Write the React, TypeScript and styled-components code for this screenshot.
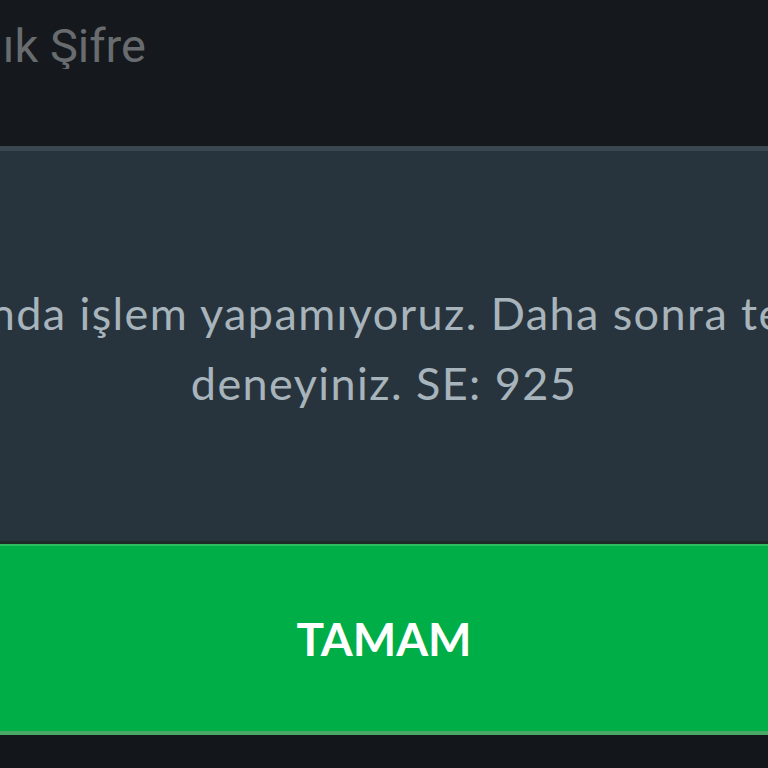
import React from "react";
import styled, { createGlobalStyle } from "styled-components";

const Global = createGlobalStyle`
  html, body { margin: 0; padding: 0; background: #15191e; }
  #root { width: 768px; height: 768px; }
`;

const Page = styled.div`
  width: 768px;
  height: 768px;
  overflow: hidden;
  background: #15191e;
  display: flex;
  flex-direction: column;
`;

const Header = styled.div`
  height: 146px;
  flex: none;
  padding-top: 22px;
  box-sizing: border-box;
`;

const LabelClip = styled.div`
  width: 146px;
  display: flex;
  justify-content: flex-end;
  overflow: hidden;
`;

const Label = styled.span`
  font-family: Roboto, "Noto Sans", sans-serif;
  font-size: 47px;
  line-height: 47px;
  color: #696c6f;
  white-space: nowrap;
  flex: none;
`;

const Dialog = styled.div`
  flex: none;
  background: #28343d;
  border-top: 5px solid #3a4650;
  display: flex;
  flex-direction: column;
`;

const Message = styled.div`
  height: 390px;
  padding-top: 3px;
  box-sizing: border-box;
  display: flex;
  flex-direction: column;
  justify-content: center;
  align-items: center;
  overflow: hidden;
`;

const Line = styled.div`
  width: 768px;
  display: flex;
  justify-content: center;
  font-family: Lato, "Noto Sans", sans-serif;
  font-size: 45px;
  letter-spacing: 1.4px;
  line-height: 70px;
  color: #a8b4bc;
  white-space: nowrap;
`;

const Divider = styled.div`
  height: 3px;
  background: #1d2a28;
`;

const Button = styled.button`
  height: 191px;
  border: none;
  border-top: 2px solid #2fbb5e;
  border-bottom: 4px solid #4aa866;
  background: #00ae47;
  color: #ffffff;
  font-family: Lato, "Noto Sans", sans-serif;
  font-weight: 700;
  font-size: 46px;
  padding: 0;
  display: flex;
  align-items: center;
  justify-content: center;
  cursor: pointer;
`;

const Footer = styled.div`
  flex: 1;
  background: #13171b;
`;

export default function App() {
  return (
    <>
      <Global />
      <Page>
        <Header>
          <LabelClip>
            <Label>Bankacılık Şifre</Label>
          </LabelClip>
        </Header>
        <Dialog>
          <Message>
            <Line>Şu anda işlem yapamıyoruz. Daha sonra tekrar</Line>
            <Line>deneyiniz. SE: 925</Line>
          </Message>
          <Divider />
          <Button>TAMAM</Button>
        </Dialog>
        <Footer />
      </Page>
    </>
  );
}
